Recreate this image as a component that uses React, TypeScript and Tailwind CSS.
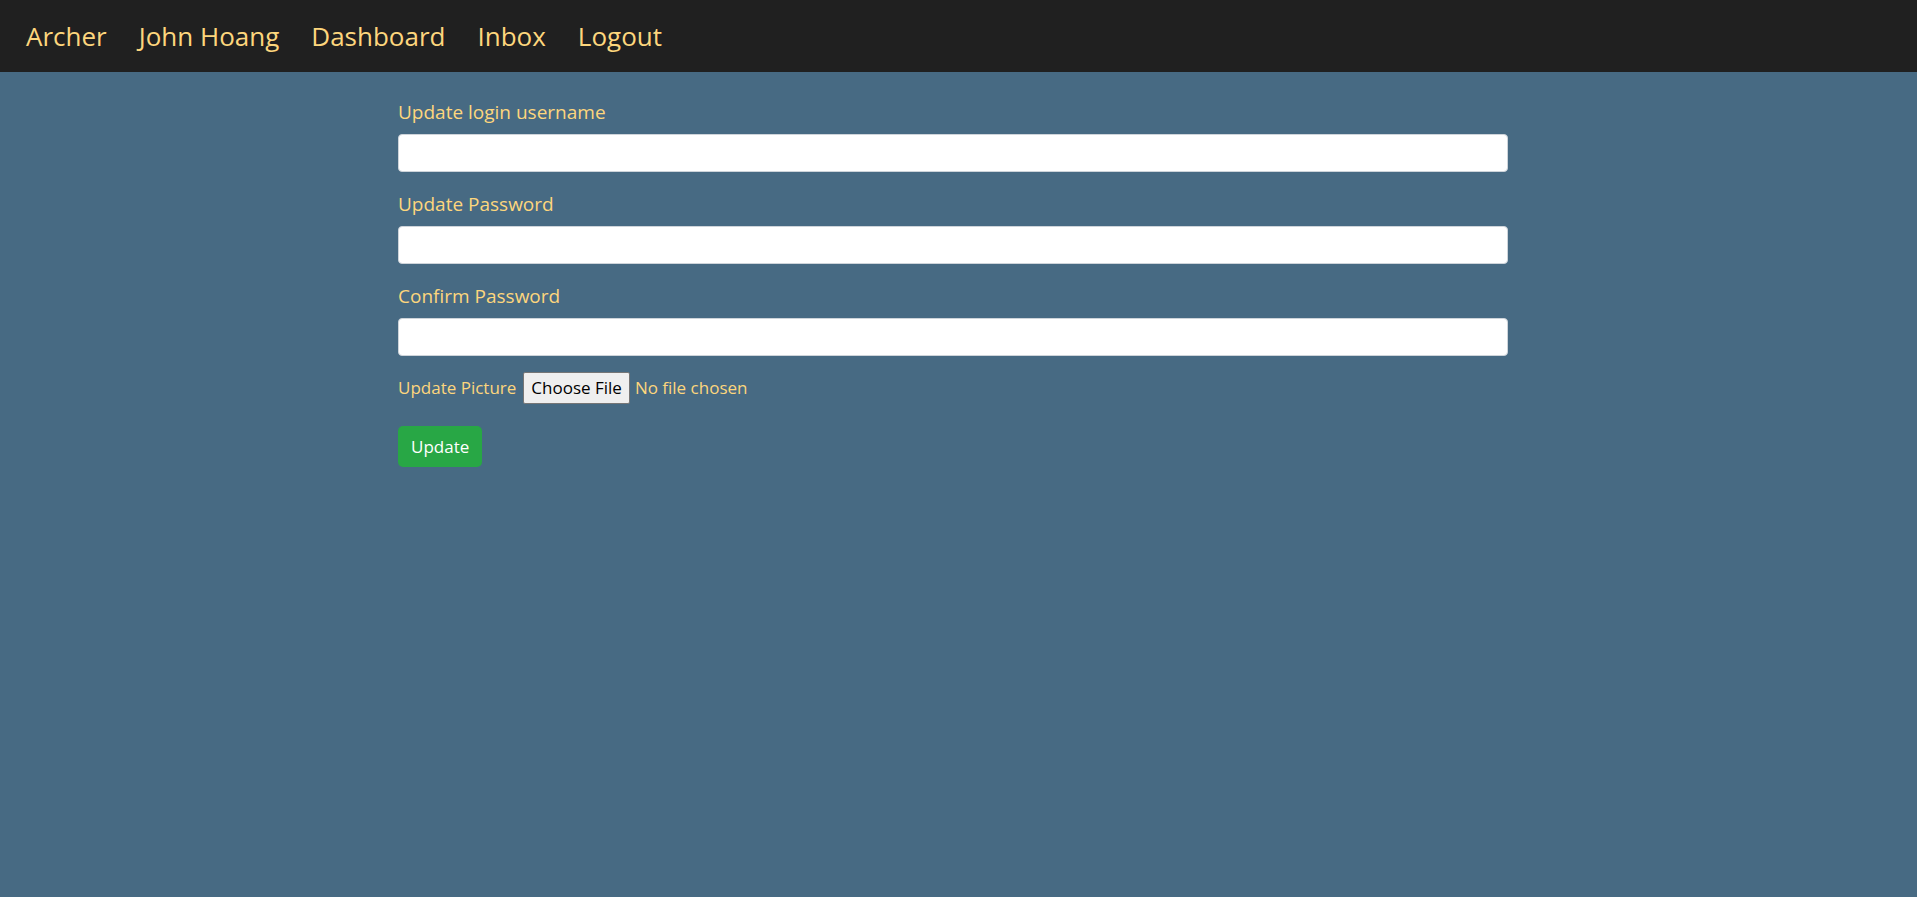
import React from 'react';

const navLinks = ['Archer', 'John Hoang', 'Dashboard', 'Inbox', 'Logout'];

const fields = [
  { id: 'username', label: 'Update login username', type: 'text' },
  { id: 'password', label: 'Update Password', type: 'password' },
  { id: 'confirm', label: 'Confirm Password', type: 'password' },
];

export default function App() {
  return (
    <div className="min-h-[897px] bg-[#476a83] font-['Open_Sans',sans-serif]">
      <nav className="h-[72px] bg-[#202020] flex items-center gap-[32px] pl-[26px]">
        {navLinks.map((link) => (
          <a key={link} href="#" className="text-[26px] leading-none text-[#fdd67d]">
            {link}
          </a>
        ))}
      </nav>

      <form className="ml-[398px] w-[1110px] pt-[26px]" onSubmit={(e) => e.preventDefault()}>
        {fields.map((f) => (
          <div key={f.id} className="mb-[18px]">
            <label htmlFor={f.id} className="block text-[19px] leading-[28px] text-[#fdd67d] mb-[8px]">
              {f.label}
            </label>
            <input
              id={f.id}
              type={f.type}
              className="block w-full h-[38px] bg-white border border-[#ced4da] rounded-[4px] px-3 outline-none"
            />
          </div>
        ))}

        <label className="flex items-center h-[32px] text-[17px] text-[#fdd67d] mt-[-2px]">
          <span>Update Picture</span>
          <input type="file" className="hidden" />
          <span className="ml-[7px] h-[32px] px-[7px] flex items-center bg-[#efefef] border border-[#767676] rounded-[2px] text-black">
            Choose File
          </span>
          <span className="ml-[5px]">No file chosen</span>
        </label>

        <button
          type="submit"
          className="mt-[22px] h-[41px] px-[13px] bg-[#28a745] text-white text-[17px] rounded-[5px]"
        >
          Update
        </button>
      </form>
    </div>
  );
}
